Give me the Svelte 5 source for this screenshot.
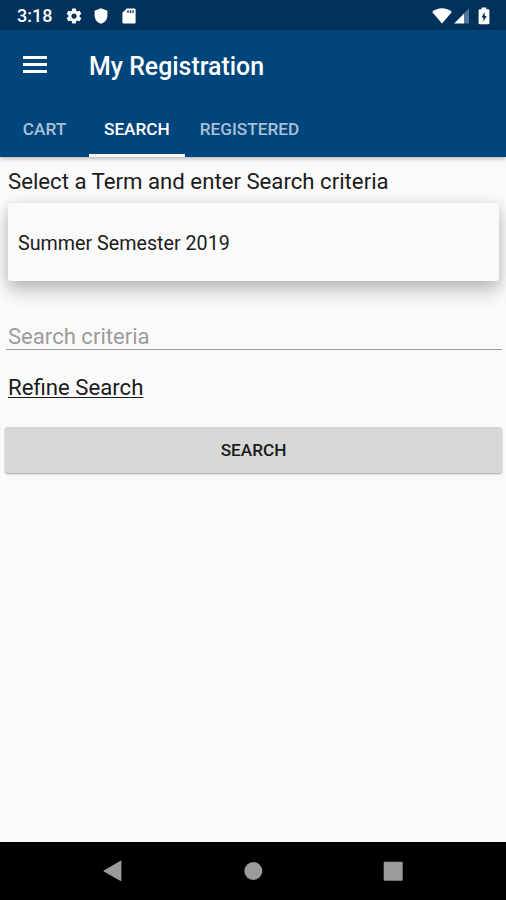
<script>
  const tabs = ['Cart', 'Search', 'Registered'];

  let activeTab = 'Search';
  let criteria = '';
</script>

<div class="screen">
  <div class="status-bar">
    <span class="clock">3:18</span>
    <svg class="gear" width="18" height="18" viewBox="0 0 24 24">
      <path
        fill="#fff"
        fill-rule="evenodd"
        d="M19.43 12.98c.04-.32.07-.64.07-.98s-.03-.66-.07-.98l2.11-1.65c.19-.15.24-.42.12-.64l-2-3.46c-.12-.22-.39-.3-.61-.22l-2.49 1c-.52-.4-1.08-.73-1.69-.98l-.38-2.65A.488.488 0 0 0 14 2h-4c-.25 0-.46.18-.49.42l-.38 2.65c-.61.25-1.17.59-1.69.98l-2.49-1c-.23-.09-.49 0-.61.22l-2 3.46c-.13.22-.07.49.12.64l2.11 1.65c-.04.32-.07.65-.07.98s.03.66.07.98l-2.11 1.65c-.19.15-.24.42-.12.64l2 3.46c.12.22.39.3.61.22l2.49-1c.52.4 1.08.73 1.69.98l.38 2.65c.03.24.24.42.49.42h4c.25 0 .46-.18.49-.42l.38-2.65c.61-.25 1.17-.59 1.69-.98l2.49 1c.23.09.49 0 .61-.22l2-3.46c.12-.22.07-.49-.12-.64l-2.11-1.65zM12 15.5a3.5 3.5 0 1 1 0-7 3.5 3.5 0 0 1 0 7z"
      />
    </svg>
    <svg class="shield" width="14" height="16" viewBox="0 0 14 16">
      <path fill="#fff" d="M7 .3 13.4 2.8V7.5C13.4 11.4 10.7 14.6 7 15.7 3.3 14.6.6 11.4.6 7.5V2.8z" />
    </svg>
    <svg class="card-icon" width="14" height="16" viewBox="0 0 14 16">
      <path fill="#fff" d="M4.7.4H12.2Q13.6.4 13.6 1.8V14.2Q13.6 15.6 12.2 15.6H1.8Q.4 15.6.4 14.2V4.7z" />
      <path stroke="#00325c" stroke-width="1.3" d="M6 2.3V5M8.5 2.3V5M11 2.3V5" />
    </svg>
    <span class="spacer"></span>
    <svg width="20" height="16" viewBox="0 0 20 16">
      <path fill="#fff" d="M10 15.5.2 4Q4.4.3 10 .3T19.8 4z" />
    </svg>
    <svg class="signal" width="16" height="16" viewBox="0 0 16 16">
      <path fill="#557899" d="M15 .6V15.5H10V5.5z" />
      <path fill="#fff" d="M10 5.5V15.5H.2z" />
    </svg>
    <svg class="battery" width="12" height="18" viewBox="0 0 12 18">
      <path fill="#fff" d="M3.7.6H8.3V2.2H10Q11.4 2.2 11.4 3.6V15.9Q11.4 17.3 10 17.3H2Q.6 17.3.6 15.9V3.6Q.6 2.2 2 2.2H3.7z" />
      <path fill="#00325c" d="M6.8 5 3.4 10.6H5.4V14.8L8.7 8.9H6.8z" />
    </svg>
  </div>

  <header>
    <div class="toolbar">
      <button class="menu" aria-label="Menu">
        <span></span>
        <span></span>
        <span></span>
      </button>
      <h1>My Registration</h1>
    </div>
    <nav class="tabs">
      {#each tabs as tab}
        <button class:active={tab === activeTab} on:click={() => (activeTab = tab)}>
          <span>{tab}</span>
        </button>
      {/each}
    </nav>
  </header>

  <main>
    <p class="hint"><span>Select a Term and enter Search criteria</span></p>
    <div class="term"><span>Summer Semester 2019</span></div>
    <input type="text" placeholder="Search criteria" bind:value={criteria} />
    <a class="refine" href="#refine">Refine Search</a>
    <button class="submit">Search</button>
  </main>

  <footer>
    <svg width="20" height="22" viewBox="0 0 20 22">
      <path fill="#9b9b9b" d="M18.4 1.2V20.4Q18.4 21.4 17.5 20.9L.8 11.5Q.1 11 .8 10.5L17.5.8Q18.4.3 18.4 1.2z" />
    </svg>
    <svg width="20" height="20" viewBox="0 0 20 20">
      <circle cx="10.3" cy="10" r="9" fill="#9b9b9b" />
    </svg>
    <svg width="20" height="20" viewBox="0 0 20 20">
      <rect x=".7" y=".7" width="19" height="19" rx="1" fill="#9b9b9b" />
    </svg>
  </footer>
</div>

<style>
  :global(body) {
    margin: 0;
    background: #fafafa;
  }

  .screen {
    display: flex;
    flex-direction: column;
    height: 900px;
    overflow: hidden;
    background: #fafafa;
    font-family: Roboto, sans-serif;
    color: #1c1c1c;
  }

  button {
    border: none;
    background: none;
    font-family: inherit;
    cursor: pointer;
  }

  .status-bar {
    display: flex;
    align-items: center;
    height: 30px;
    box-sizing: border-box;
    padding: 1px 16px 0 17px;
    background: #00325c;
  }

  .clock {
    width: 48px;
    font-size: 18px;
    font-weight: 500;
    color: #fff;
  }

  .shield {
    margin-left: 11px;
  }

  .card-icon {
    margin-left: 14px;
  }

  .spacer {
    flex: 1;
  }

  .signal {
    margin-left: 2px;
  }

  .battery {
    margin-left: 8px;
  }

  header {
    position: relative;
    background: #00457c;
    box-shadow: 0 1px 5px rgba(0, 0, 0, 0.35);
  }

  .toolbar {
    display: flex;
    align-items: center;
    height: 70px;
  }

  .menu {
    display: flex;
    flex-direction: column;
    gap: 4px;
    width: 24px;
    margin: -1px 0 0 23px;
    padding: 0;
  }

  .menu span {
    height: 3px;
    background: #fff;
  }

  h1 {
    margin: 3px 0 0 42px;
    font-size: 24.9px;
    font-weight: 500;
    line-height: 30px;
    color: #fff;
  }

  .tabs {
    display: flex;
    height: 57px;
  }

  .tabs button {
    min-width: 89px;
    padding: 3px 15px 0;
    border-bottom: 3px solid transparent;
    font-size: 17.2px;
    font-weight: 500;
    text-transform: uppercase;
    color: #a9c0d6;
  }

  .tabs button.active {
    border-bottom-color: #fafafa;
    color: #fff;
  }

  main {
    display: flex;
    flex-direction: column;
    flex: 1;
  }

  .hint {
    margin: 10px 8px 8px;
    font-size: 22.2px;
    line-height: 28px;
  }

  .term {
    display: flex;
    align-items: center;
    height: 78px;
    box-sizing: border-box;
    margin: 0 7px 0 8px;
    padding: 2px 0 0 10px;
    border-radius: 3px;
    background: #fafafa;
    box-shadow: 0 12px 18px rgba(0, 0, 0, 0.17), 0 2px 14px rgba(0, 0, 0, 0.17);
    font-size: 19.7px;
  }

  input {
    height: 31px;
    box-sizing: border-box;
    margin: 38px 4px 0 6px;
    padding: 3px 2px 0;
    border: none;
    border-bottom: 1px solid #999;
    outline: none;
    background: none;
    font-family: inherit;
    font-size: 22.1px;
  }

  input::placeholder {
    color: #9c9c9c;
  }

  .refine {
    align-self: flex-start;
    margin: 22px 0 0 8px;
    font-size: 22.2px;
    line-height: 30px;
    color: inherit;
    text-decoration-thickness: 1px;
    text-underline-offset: 2px;
  }

  .submit {
    height: 46px;
    margin: 25px 4px 0 5px;
    padding: 0 0 1px;
    border-radius: 3px;
    background: #d6d8d7;
    box-shadow: 0 1px 2px rgba(0, 0, 0, 0.35);
    font-size: 17.2px;
    font-weight: 500;
    text-transform: uppercase;
    color: #1c1c1c;
  }

  footer {
    display: flex;
    align-items: center;
    justify-content: space-between;
    height: 58px;
    box-sizing: border-box;
    padding: 0 103px;
    background: #000;
  }
</style>
